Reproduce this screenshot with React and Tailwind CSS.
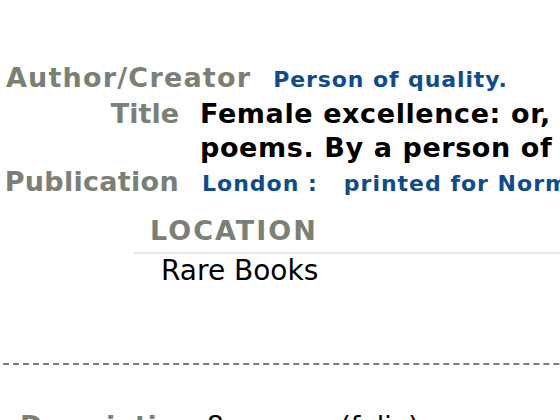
import React from 'react';

const labelCls = 'shrink-0 min-w-[179px] text-right font-bold text-[#7b8074]';

const Row = ({ label, labelClass = '', children }) => (
  <div className="flex items-baseline gap-[21px]">
    <div className={`${labelCls} ${labelClass}`}>{label}</div>
    <div className="whitespace-nowrap">{children}</div>
  </div>
);

const App = () => {
  return (
    <div
      className="w-[560px] h-[420px] overflow-hidden bg-white"
      style={{ fontFamily: '"DejaVu Sans", Verdana, sans-serif' }}
    >
      <div className="w-[1400px]">
        {/* Record fields */}
        <div className="pt-[61px] text-[27px] leading-[34px]">
          <div className="flex items-baseline gap-[22px] pl-[6px]">
            <div className="shrink-0 font-bold text-[#7b8074] tracking-[1.2px]">Author/Creator</div>
            <span className="whitespace-nowrap text-[22px] font-bold text-[#0f4c8f] tracking-[0.9px]">
              Person of quality.
            </span>
          </div>
          <Row label="Title">
            <span className="text-[27px] font-bold text-black tracking-[0.6px]">
              Female excellence: or, woman display'd, in several satyrick
              <br />
              poems. By a person of quality.
            </span>
          </Row>
          <Row label="Publication" labelClass="tracking-[0.3px]">
            <span className="text-[22px] font-bold text-[#0f4c8f] tracking-[1px]">
              <span className="ml-[2px]">London :</span>
              <span className="ml-[26px]">printed for Norman, and sold by the booksellers of London and Westminster</span>
            </span>
          </Row>
        </div>

        {/* Holdings */}
        <div className="ml-[134px] mt-[13px] w-[800px]">
          <div className="pl-[16px] pb-[4px] border-b-2 border-[#e8e8e8] text-[27px] leading-[34px] font-bold uppercase tracking-[2px] text-[#7b8074]">
            Location
          </div>
          <div className="pl-[27px] text-[28px] leading-[34px] text-black">Rare Books</div>
        </div>

        {/* Divider */}
        <div className="mt-[75px] ml-[3px] border-t-2 border-dashed border-[#7b8074]"></div>

        {/* Description */}
        <div className="pt-[44px] pl-[20px] flex items-baseline gap-[12px] text-[27px] leading-[34px]">
          <div className="font-bold text-[#7b8074]">Description</div>
          <div className="text-black">8 pages ; (folio)</div>
        </div>
      </div>
    </div>
  );
};

export default App;
